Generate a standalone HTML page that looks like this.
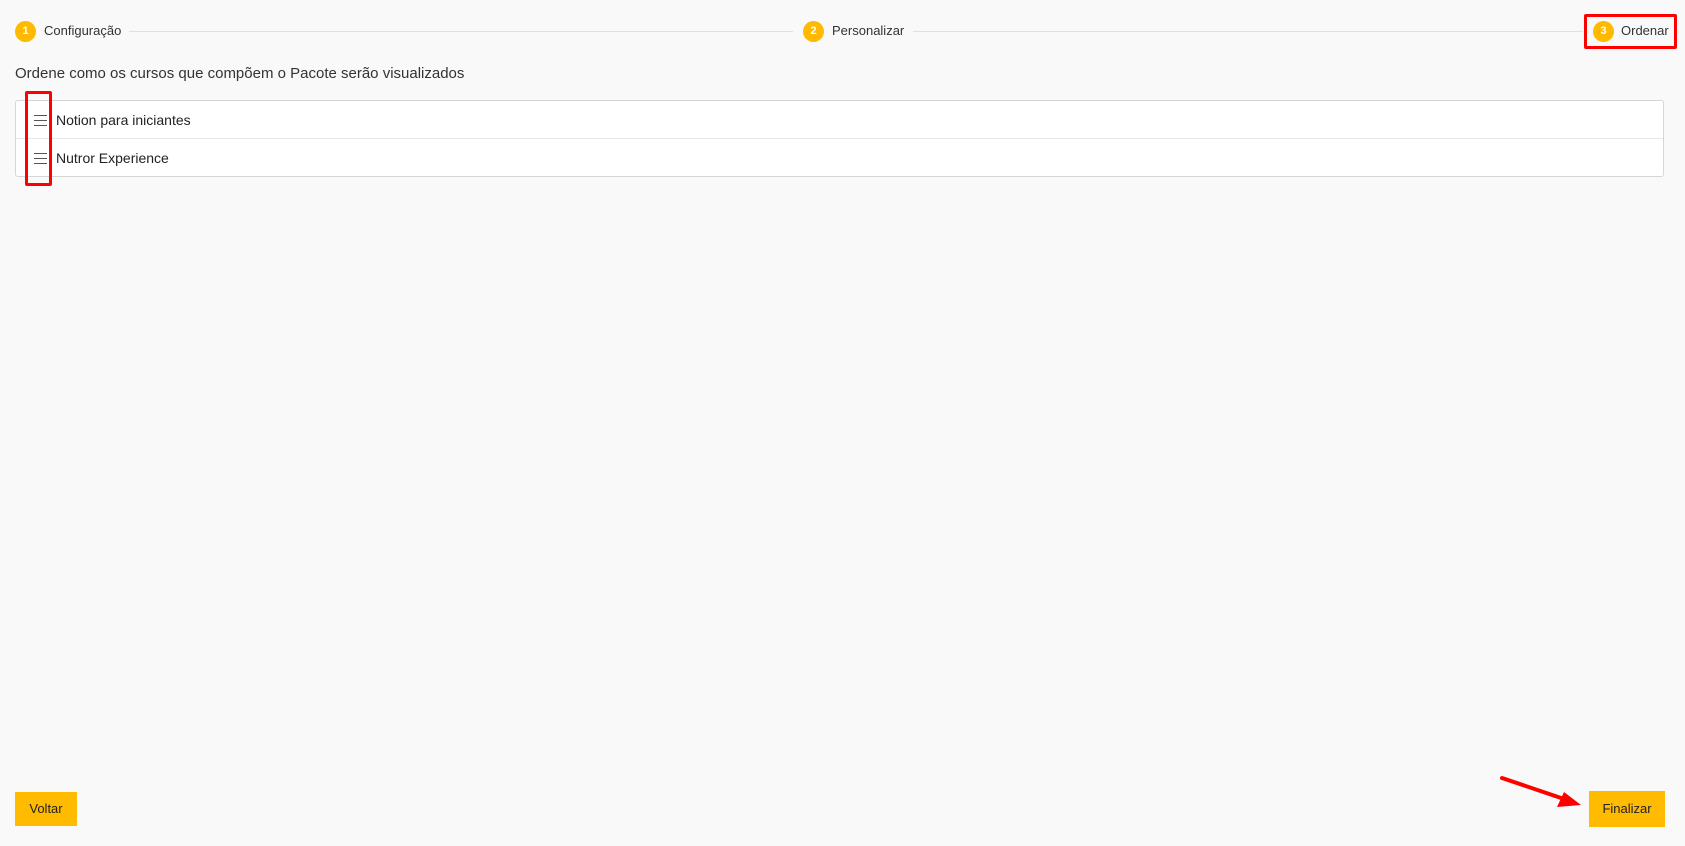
<!DOCTYPE html>
<html><head><meta charset="utf-8"><style>
*{margin:0;padding:0;box-sizing:border-box}
body{width:1685px;height:846px;background:#f9f9f9;font-family:"Liberation Sans",Arial,sans-serif;color:#222;position:relative;overflow:hidden}
.a{position:absolute}
.c{width:21px;height:21px;border-radius:50%;background:#ffb900;color:#fff;font-size:11px;font-weight:bold;text-align:center;line-height:21px}
.st{font-size:13px;color:#333;line-height:16px}
.ln{height:1px;background:#e0e0e0;top:31px}
.btn{background:#ffbb00;font-size:13px;color:#222;text-align:center}
.hb{width:13px;height:11px;border-top:1.5px solid #555;border-bottom:1.5px solid #555}
.hb::after{content:"";position:absolute;left:0;right:0;top:3.5px;height:1.5px;background:#555}
</style></head><body>
<div class="a c" style="left:15px;top:21px">1</div>
<div class="a st" style="left:44px;top:23px">Configuração</div>
<div class="a ln" style="left:129px;width:664px"></div>
<div class="a c" style="left:803px;top:21px">2</div>
<div class="a st" style="left:832px;top:23px">Personalizar</div>
<div class="a ln" style="left:913px;width:670px"></div>
<div class="a c" style="left:1593px;top:21px">3</div>
<div class="a st" style="left:1621px;top:23px">Ordenar</div>
<div class="a" style="left:1584px;top:14px;width:93px;height:35px;border:3px solid #f00;border-radius:2px"></div>
<div class="a" style="left:15px;top:65px;font-size:15px;color:#333">Ordene como os cursos que compõem o Pacote serão visualizados</div>
<div class="a" style="left:15px;top:100px;width:1649px;height:77px;background:#fff;border:1px solid #d6d6d6;border-radius:3px">
 <div class="a" style="left:0;right:0;top:37px;height:1px;background:#e8e8e8"></div>
 <div class="a hb" style="left:18px;top:14px"></div>
 <div class="a" style="left:40px;top:11px;font-size:14px;color:#222">Notion para iniciantes</div>
 <div class="a hb" style="left:18px;top:52px"></div>
 <div class="a" style="left:40px;top:49px;font-size:14px;color:#222">Nutror Experience</div>
</div>
<div class="a" style="left:25px;top:91px;width:27px;height:95px;border:3px solid #f00;border-radius:2px"></div>
<div class="a btn" style="left:15px;top:792px;width:62px;height:34px;line-height:34px">Voltar</div>
<div class="a btn" style="left:1589px;top:791px;width:76px;height:36px;line-height:36px">Finalizar</div>
<svg class="a" style="left:1495px;top:770px" width="95" height="40"><line x1="7" y1="8" x2="72" y2="30" stroke="#f00" stroke-width="4" stroke-linecap="round"/><polygon points="86,35 62,37 69,22" fill="#f00"/></svg>
</body></html>
